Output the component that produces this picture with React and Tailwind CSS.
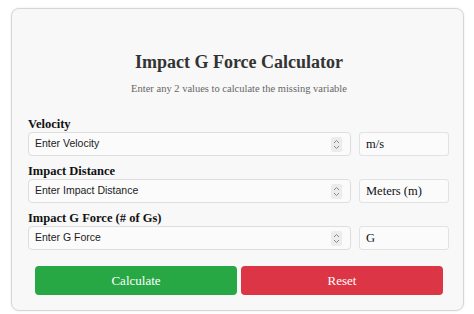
import React from "react";

function Spinner() {
  return (
    <div className="flex h-[15px] w-[11px] flex-col items-center justify-center rounded-[2px] bg-[#ececec]">
      <svg width="7" height="11" viewBox="0 0 7 11" fill="none" stroke="#8a8a8a" strokeWidth="1">
        <path d="M1 4 L3.5 1.5 L6 4" />
        <path d="M1 7 L3.5 9.5 L6 7" />
      </svg>
    </div>
  );
}

function Row({ label, placeholder, unit }) {
  return (
    <div className="flex flex-col">
      <div className="h-[18px] pt-[2px] text-[12.5px] font-bold leading-[16px] text-[#111]" style={{ fontFamily: '"Liberation Serif", serif' }}>
        {label}
      </div>
      <div className="flex items-center gap-[8px]">
        <div className="flex h-[24px] w-[323px] items-center justify-between rounded-[4px] border border-[#dedede] bg-[#fbfbfb] pl-[6px] pr-[8px]">
          <span className="text-[10.5px] text-[#222]" style={{ fontFamily: '"Liberation Sans", sans-serif' }}>{placeholder}</span>
          <Spinner />
        </div>
        <div className="flex h-[24px] w-[90px] items-center rounded-[3px] border border-[#e2e2e2] bg-[#fbfbfb] pl-[6px] text-[12.5px] text-[#111]" style={{ fontFamily: '"Liberation Serif", serif' }}>
          {unit}
        </div>
      </div>
    </div>
  );
}

export default function App() {
  return (
    <div className="h-[314px] w-[474px] bg-white pl-[11px] pt-[8px]">
      <div className="h-[303px] w-[453px] rounded-[8px] border border-[#d6d6d6] bg-[#f8f8f8] pl-[16px] pr-[13px] pt-[41px] shadow-[0_0_3px_rgba(0,0,0,0.08)]">
        <h1 className="text-center text-[18px] font-bold leading-[24px] text-[#333]" style={{ fontFamily: '"Liberation Serif", serif' }}>
          Impact G Force Calculator
        </h1>
        <p className="mt-[8px] text-center text-[10.5px] leading-[14px] text-[#666]" style={{ fontFamily: '"Liberation Serif", serif' }}>
          Enter any 2 values to calculate the missing variable
        </p>
        <div className="mt-[18px] flex flex-col gap-[5px]">
          <Row label="Velocity" placeholder="Enter Velocity" unit="m/s" />
          <Row label="Impact Distance" placeholder="Enter Impact Distance" unit="Meters (m)" />
          <Row label="Impact G Force (# of Gs)" placeholder="Enter G Force" unit="G" />
        </div>
        <div className="mt-[16px] flex gap-[4px] pl-[7px]">
          <button className="h-[29px] w-[202px] rounded-[4px] bg-[#28a745] text-[13px] text-white" style={{ fontFamily: '"Liberation Serif", serif' }}>
            Calculate
          </button>
          <button className="h-[29px] w-[202px] rounded-[4px] bg-[#dc3545] text-[13px] text-white" style={{ fontFamily: '"Liberation Serif", serif' }}>
            Reset
          </button>
        </div>
      </div>
    </div>
  );
}
